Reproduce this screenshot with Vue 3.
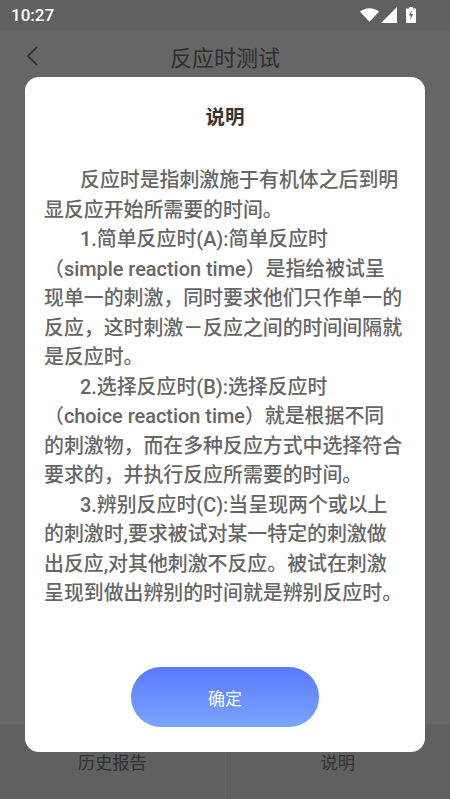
<script setup>
const paragraphs = [
  '反应时是指刺激施于有机体之后到明显反应开始所需要的时间。',
  '1.简单反应时(A):简单反应时（simple reaction time）是指给被试呈现单一的刺激，同时要求他们只作单一的反应，这时刺激－反应之间的时间间隔就是反应时。',
  '2.选择反应时(B):选择反应时（choice reaction time）就是根据不同的刺激物，而在多种反应方式中选择符合要求的，并执行反应所需要的时间。',
  '3.辨别反应时(C):当呈现两个或以上的刺激时,要求被试对某一特定的刺激做出反应,对其他刺激不反应。被试在刺激呈现到做出辨别的时间就是辨别反应时。'
]
</script>

<template>
  <div class="screen">
    <div class="status">
      <span class="time">10:27</span>
      <div class="status-icons">
        <svg class="wifi" viewBox="0 0 20 14"><path d="M0 3.600C2.800 1.300 6.200 0 10 0s7.200 1.300 10 3.600L10 14z" /></svg>
        <svg class="signal" viewBox="0 0 16 16"><path d="M16 0v16H0z" /></svg>
        <svg class="battery" viewBox="0 0 10 16">
          <path d="M3 0h4v1.500h3V16H0V1.500h3z" />
          <path class="bolt" d="M5.800 3 2.800 8.500h2L4 13l3.200-6h-2z" />
        </svg>
      </div>
    </div>
    <header class="header">
      <svg class="back" viewBox="0 0 12 20"><path d="M11 1 2 10l9 9" /></svg>
      <h1 class="title">反应时测试</h1>
    </header>
    <main class="content"></main>
    <footer class="tabs">
      <div class="tab">历史报告</div>
      <div class="tab tab-right">说明</div>
    </footer>
    <div class="overlay">
      <section class="modal">
        <h2 class="modal-title">说明</h2>
        <div class="body">
          <p v-for="p in paragraphs" :key="p" class="para">{{ p }}</p>
        </div>
        <button class="confirm">确定</button>
      </section>
    </div>
  </div>
</template>

<style>
html, body { margin: 0; padding: 0; }
</style>

<style scoped>
.screen {
  position: relative;
  width: 450px;
  height: 799px;
  display: flex;
  flex-direction: column;
  overflow: hidden;
  background: #fff;
  font-family: Roboto, "Noto Sans CJK SC", sans-serif;
}
.status {
  position: relative;
  z-index: 2;
  height: 30px;
  display: flex;
  align-items: center;
  justify-content: space-between;
  padding: 0 34px 0 11px;
  background: #606060;
}
.time { color: #fff; font-size: 17px; font-weight: 500; }
.status-icons { display: flex; align-items: center; }
.status-icons svg { display: block; fill: #fff; }
.wifi { width: 19px; height: 14px; }
.signal { width: 16px; height: 16px; margin-left: 2px; }
.battery { width: 10px; height: 16px; margin-left: 9px; }
.status-icons .bolt { fill: #666; }
.header {
  height: 54px;
  position: relative;
  display: flex;
  align-items: center;
  justify-content: center;
  padding-bottom: 2px;
  box-sizing: border-box;
  background: #fff;
}
.back {
  position: absolute;
  left: 26px;
  top: 16px;
  width: 12px;
  height: 20px;
  fill: none;
  stroke: #777;
  stroke-width: 1.600;
}
.title {
  margin: 0;
  font-size: 22px;
  font-weight: 400;
  color: #777;
}
.content { flex: 1; background: #fff; }
.tabs {
  height: 74px;
  display: flex;
  background: #f0f0f0;
  color: #808080;
  font-size: 17.300px;
}
.tab {
  flex: 1;
  text-align: center;
  padding-top: 24px;
}
.tab-right { border-left: 1px solid #fff; }
.overlay {
  position: absolute;
  inset: 0;
  display: flex;
  justify-content: center;
  padding-top: 77px;
  background: rgba(0, 0, 0, 0.6);
}
.modal {
  width: 400px;
  height: 675px;
  box-sizing: border-box;
  display: flex;
  flex-direction: column;
  align-items: center;
  background: #fff;
  border-radius: 14px;
}
.modal-title {
  margin: 28px 0 0;
  font-size: 19.500px;
  line-height: 26px;
  font-weight: 700;
  color: #333;
}
.body {
  height: 488px;
  margin-top: 35px;
  padding: 0 22.500px 0 19px;
  box-sizing: border-box;
  width: 100%;
}
.para {
  margin: 0;
  font-size: 19.900px;
  line-height: 29.500px;
  font-weight: 500;
  color: #666;
  text-indent: 36px;
}
.confirm {
  width: 188px;
  height: 60px;
  margin-top: 13px;
  border: none;
  border-radius: 30px;
  background: linear-gradient(180deg, #5a78ff, #7aa6ff);
  color: #fff;
  font-family: inherit;
  font-size: 17px;
}
</style>
